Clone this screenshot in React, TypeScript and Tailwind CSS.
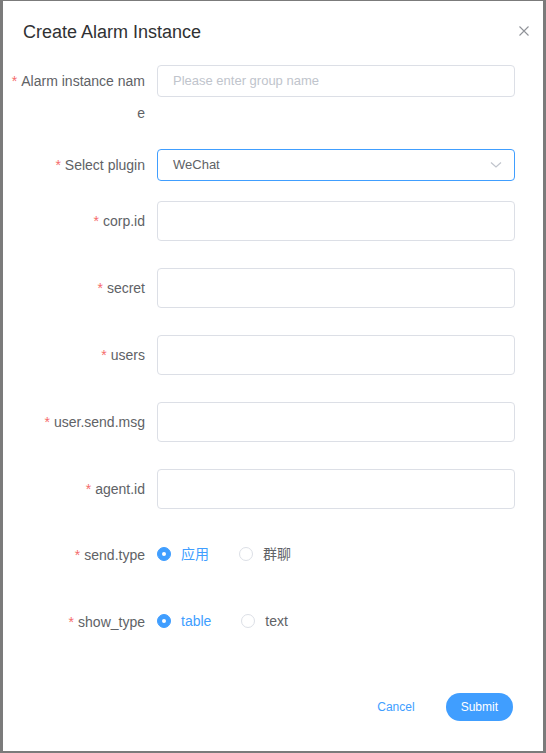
import React from "react";

const font = { fontFamily: '"Liberation Sans", Arial, sans-serif' };

function Label({ text, lh, wrap = false }: { text: string; lh: string; wrap?: boolean }) {
  return (
    <div
      className={`w-[146px] shrink-0 pr-[12px] text-right text-[14px] text-[#606266] ${lh} ${wrap ? "break-all" : "whitespace-nowrap"}`}
    >
      <span className="mr-[4px] text-[#f56c6c]">*</span>
      {text}
    </div>
  );
}

function InputRow({ label, mt, h = "h-[40px]", lh = "leading-[40px]" }: { label: string; mt: string; h?: string; lh?: string }) {
  return (
    <div className={`flex ${mt}`}>
      <Label text={label} lh={lh} />
      <div className={`w-[358px] ${h} rounded-[4px] border border-[#dcdfe6] bg-white`} />
    </div>
  );
}

function Radio({ checked, label }: { checked: boolean; label: string }) {
  return (
    <div className="mr-[30px] flex items-center">
      {checked ? (
        <span className="flex h-[14px] w-[14px] items-center justify-center rounded-full border border-[#409eff] bg-[#409eff]">
          <span className="h-[4px] w-[4px] rounded-full bg-white" />
        </span>
      ) : (
        <span className="h-[14px] w-[14px] rounded-full border border-[#dcdfe6] bg-white" />
      )}
      <span
        className={`pl-[10px] text-[14px] ${checked ? "text-[#409eff]" : "text-[#606266]"}`}
        style={{ fontFamily: '"Liberation Sans", Arial, "Noto Sans CJK SC", sans-serif' }}
      >
        {label}
      </span>
    </div>
  );
}

function RadioRow({ label, mt, options }: { label: string; mt: string; options: [string, boolean][] }) {
  return (
    <div className={`flex h-[40px] ${mt}`}>
      <Label text={label} lh="leading-[42px]" />
      <div className="flex h-[40px] items-center">
        {options.map(([t, c]) => (
          <Radio key={t} label={t} checked={c} />
        ))}
      </div>
    </div>
  );
}

export default function App() {
  return (
    <div className="h-[753px] w-[546px] bg-[#7b7b7b] pb-[2px] pl-[3px] pr-[3px] pt-[1px]" style={font}>
      <div className="flex h-full flex-col bg-white">
        <div className="flex items-start justify-between pl-[20px] pr-[14px] pt-[19px]">
          <div className="text-[18px] leading-[24px] text-[#303133]">Create Alarm Instance</div>
          <svg width="10" height="10" viewBox="0 0 10 10" className="mt-[6px]">
            <path d="M0.5 0.5L9.5 9.5M9.5 0.5L0.5 9.5" stroke="#909399" strokeWidth="1.1" fill="none" />
          </svg>
        </div>

        <div className="flex flex-col pl-[8px] pt-[21px]">
          <div className="flex">
            <Label text="Alarm instance name" lh="leading-[32px]" wrap />
            <div className="flex h-[32px] w-[358px] items-center rounded-[4px] border border-[#dcdfe6] bg-white pl-[15px] text-[13px] text-[#c0c4cc]">
              Please enter group name
            </div>
          </div>

          <div className="mt-[20px] flex">
            <Label text="Select plugin" lh="leading-[32px]" />
            <div className="flex h-[32px] w-[358px] items-center justify-between rounded-[4px] border border-[#409eff] bg-white pl-[15px] pr-[12px] text-[13px] text-[#606266]">
              <span>WeChat</span>
              <svg width="12" height="8" viewBox="0 0 12 8">
                <path d="M1 1.5L6 6L11 1.5" stroke="#c0c4cc" strokeWidth="1.2" fill="none" />
              </svg>
            </div>
          </div>

          <InputRow label="corp.id" mt="mt-[20px]" />
          <InputRow label="secret" mt="mt-[27px]" />
          <InputRow label="users" mt="mt-[27px]" />
          <InputRow label="user.send.msg" mt="mt-[27px]" />
          <InputRow label="agent.id" mt="mt-[27px]" />

          <RadioRow
            label="send.type"
            mt="mt-[25px]"
            options={[
              ["应用", true],
              ["群聊", false],
            ]}
          />
          <RadioRow
            label="show_type"
            mt="mt-[27px]"
            options={[
              ["table", true],
              ["text", false],
            ]}
          />
        </div>

        <div className="mt-[52px] flex items-center justify-end pr-[30px]">
          <button className="px-[15px] text-[12px] leading-[28px] text-[#409eff]">Cancel</button>
          <button className="ml-[16px] h-[28px] rounded-full bg-[#409eff] px-[15px] text-[12px] font-medium text-white">
            Submit
          </button>
        </div>
      </div>
    </div>
  );
}
